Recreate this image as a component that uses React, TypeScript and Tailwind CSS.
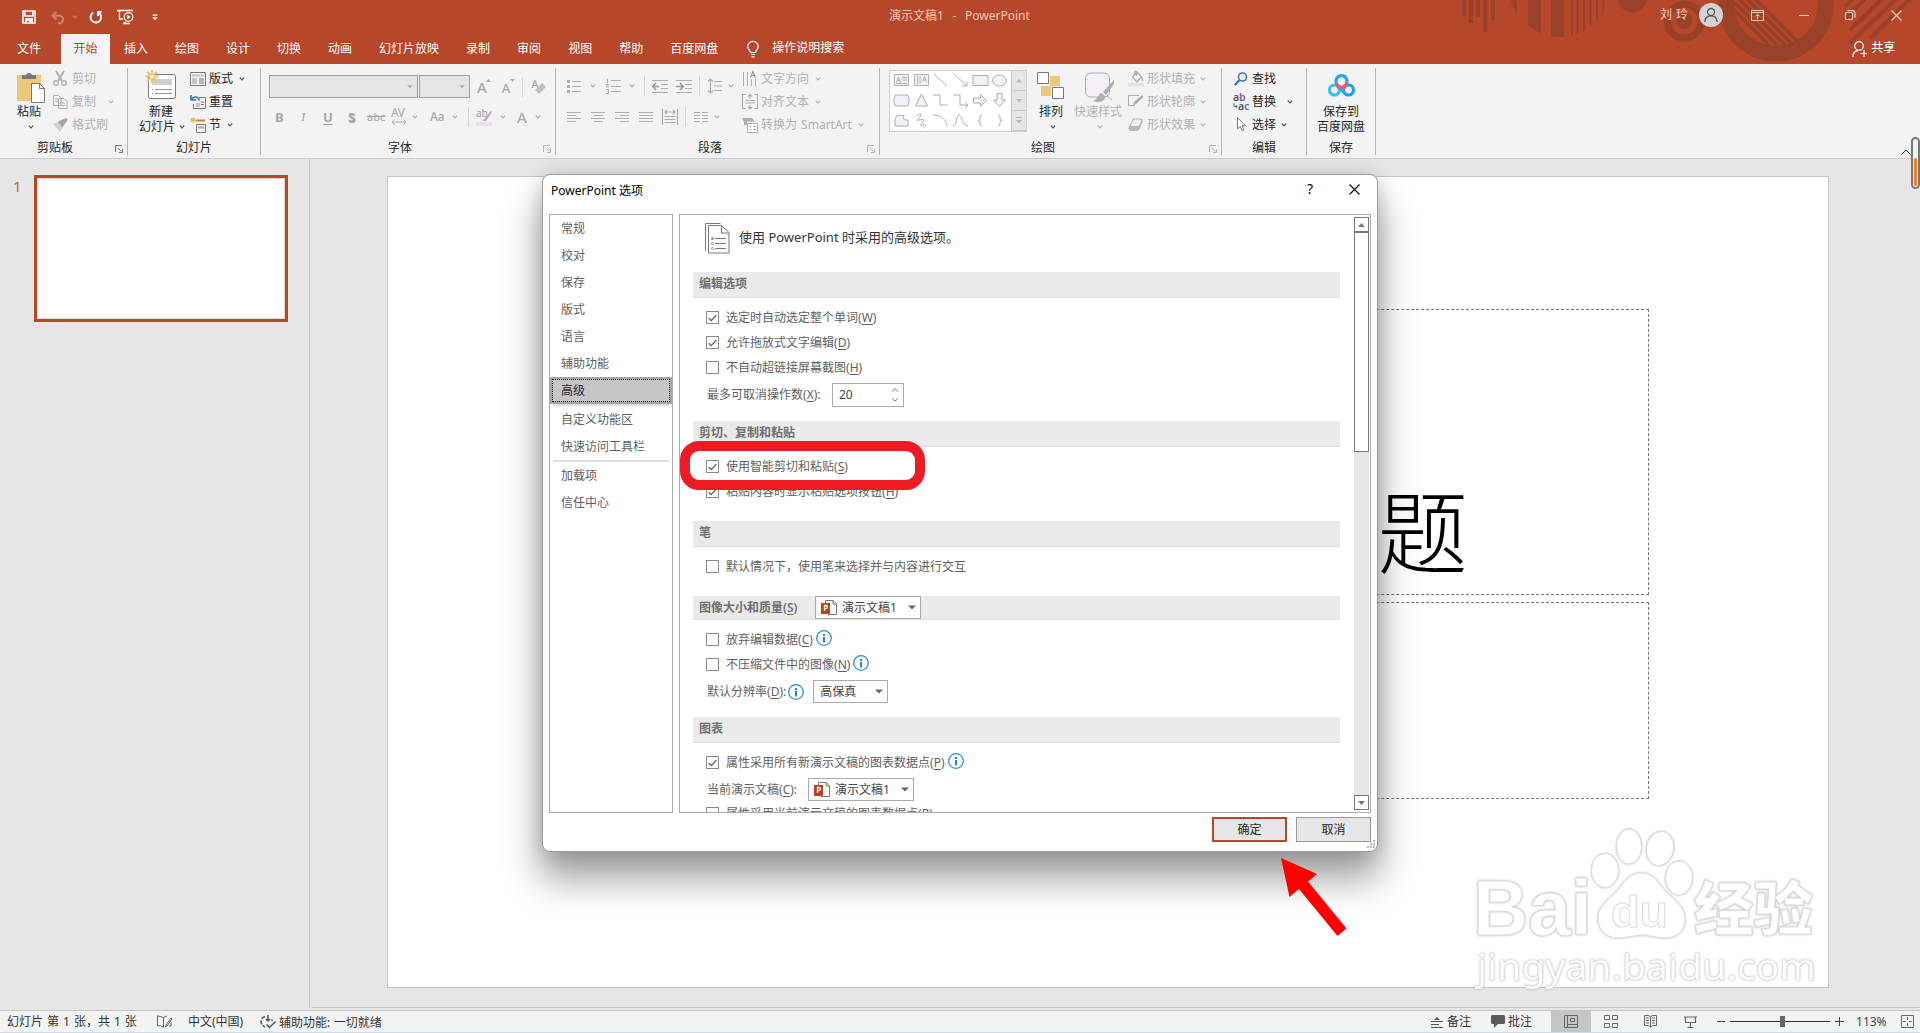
import React from "react";

const INK = "#b0adb0";

function Ico({ w, h, className = "", children }: { w: number; h: number; className?: string; children: React.ReactNode }) {
  return (
    <svg width={w} height={h} viewBox={`0 0 ${w} ${h}`} fill="none" className={`shrink-0 overflow-visible ${className}`}>
      {children}
    </svg>
  );
}

function Chev({ className = "", color = "#555" }: { className?: string; color?: string }) {
  return (
    <Ico w={6} h={4} className={className}>
      <path d="M.8.6 3 2.8 5.200.6" stroke={color} strokeWidth="1.2" />
    </Ico>
  );
}

function VSep({ className = "" }: { className?: string }) {
  return <span className={`h-5 w-px shrink-0 bg-[#d4d4d4] ${className}`} />;
}

function Group({ label, width, pad, launcher, dim, children }: { label: string; width: string; pad: string; launcher?: boolean; dim?: boolean; children: React.ReactNode }) {
  return (
    <div className={`flex h-[87px] shrink-0 flex-col border-r border-[#b5b5b5] ${width}`}>
      <div className="flex h-[70px]">{children}</div>
      <div className="flex h-[17px] items-center text-[#262626]">
        <span className={`flex-1 whitespace-nowrap pt-[3px] leading-[16px] ${pad}`}>{label}</span>
        {launcher && (
          <Ico w={8} h={8} className="mr-1 mt-1">
            <path d="M.5 7V.5H7M3 3l3.500 3.500M7.500 4v3.500H4" stroke={dim ? "#b5b5b5" : "#777"} />
          </Ico>
        )}
      </div>
    </div>
  );
}

const tabs = ["插入", "绘图", "设计", "切换", "动画", "幻灯片放映", "录制", "审阅", "视图", "帮助", "百度网盘"];

function TitleArt() {
  return (
    <svg className="absolute left-[1440px] top-0" width="480" height="64" viewBox="1440 0 480 64" fill="#9a4129">
      <path d="M1462 0h4v16h-4zM1469 0h4v23h-4zM1476 0h4v17h-4zM1483 0h4.500v32h-4.500zM1491 0h4v20h-4z" />
      <clipPath id="dome"><circle cx="1560" cy="-14" r="51" /></clipPath>
      <g clipPath="url(#dome)">
        <path d="M1508 0h9v40h-9zM1528 0h13v40h-13zM1551 0h13v40h-13zM1571 0h2v40h-2zM1576.500 0h2v40h-2zM1583 0h2v40h-2zM1589.500 0h2v40h-2zM1596 0h2v40h-2zM1602.500 0h2v40h-2zM1608.500 0h2v40h-2z" />
      </g>
      <circle cx="1632.500" cy="-2" r="14.500" />
      <circle cx="1684.300" cy="21" r="17" fill="none" stroke="#9a4129" strokeWidth="7" />
      <circle cx="1684.300" cy="21" r="8" />
      <circle cx="1776" cy="3.500" r="50" fill="none" stroke="#9a4129" strokeWidth="16" />
      <clipPath id="disc"><circle cx="1776" cy="3.500" r="43" /></clipPath>
      <g clipPath="url(#disc)" stroke="#9a4129" strokeWidth="3.500">
        <path d="M1716-8l70 70M1724-8l70 70M1732-8l70 70M1740-8l70 70M1748-8l70 70" />
      </g>
      <g stroke="#9a4129" strokeWidth="4">
        <path d="M1845 7l10-10M1846 18l22-22M1860 21l24-24M1850 43l48-46M1870 39l42-42M1850 30l30-30" />
      </g>
    </svg>
  );
}

function TitleBar() {
  return (
    <header className="relative h-16 bg-[#b7472a] text-white">
      <TitleArt />
      <div className="relative flex h-[34px] items-center">
        <Ico w={14} h={14} className="ml-[22px]">
          <path d="M1 1h12v12H1zM3 1v5h8V1" stroke="#fff" strokeWidth="1.600" />
          <path d="M3 8h8v5H7v-2H5v2H3z" fill="#fff" />
        </Ico>
        <Ico w={15} h={13} className="ml-[15px]">
          <path d="M5.500.8 1.500 4.800l4 4M2 4.800h7.500a4 4 0 0 1 0 7.400H7" stroke="#d1836d" strokeWidth="2" />
        </Ico>
        <Chev className="ml-1.5" color="#d1836d" />
        <Ico w={14} h={14} className="ml-[11px]">
          <path d="M4.200 2.600a5.300 5.300 0 1 0 5.600.2M12.500 2H9v4" stroke="#fff" strokeWidth="1.900" />
        </Ico>
        <Ico w={17} h={16} className="ml-3.5">
          <path d="M0 1.500h16M2.500 1.500V10H6M6 14.500h7M8 12.500v2" stroke="#fff" strokeWidth="1.300" />
          <circle cx="11.500" cy="8" r="4.300" stroke="#fff" strokeWidth="1.200" />
          <path d="M10.300 5.800v4.400L13.700 8z" fill="#fff" />
        </Ico>
        <Ico w={6} h={7} className="ml-[18px]">
          <path d="M.5.500h5v1.200h-5zM.2 3.300h5.600L3 6.300z" fill="#fff" />
        </Ico>
        <span className="ml-[731px] w-[145px] whitespace-pre pb-0.5 [word-spacing:1.2px] text-[#fbc9b5]">演示文稿1  -  PowerPoint</span>
        <span className="ml-[626px] w-[34px] whitespace-pre pb-1 [word-spacing:1px] text-[#fbd3c4]">刘 玲</span>
        <span className="ml-[5px] -mt-1 flex size-6 items-center justify-center rounded-full bg-[#d3d3d3]">
          <Ico w={14} h={14}>
            <circle cx="7" cy="4" r="3.500" stroke="#555" strokeWidth="1.300" />
            <path d="M.8 14C1 10 3.500 7.800 7 7.800s6 2.200 6.200 6.200" stroke="#555" strokeWidth="1.300" />
          </Ico>
        </span>
        <Ico w={13} h={11} className="-mt-1 ml-7">
          <path d="M.5.500h12v10H.5zM.5 2.500h12M6.500 9V4.500M4.500 6.300l2-2 2 2" stroke="#fbd3c4" />
        </Ico>
        <Ico w={10} h={1} className="-mt-1 ml-[35px]"><path d="M0 .5h10" stroke="#fbd3c4" /></Ico>
        <Ico w={11} h={11} className="-mt-1 ml-9">
          <path d="M.5 3.500q0-1 1-1h5q1 0 1 1v5q0 1-1 1h-5q-1 0-1-1zM2.500.600h5.500q1.900.2 1.900 2V8" stroke="#fbd3c4" strokeWidth="1.100" />
        </Ico>
        <Ico w={11} h={11} className="-mt-1 ml-[35px]"><path d="M.5.500l10 10M10.500.500l-10 10" stroke="#fbd3c4" strokeWidth="1.100" /></Ico>
      </div>
      <nav className="relative flex h-[30px] items-center leading-[30px]">
        <span className="w-[44px] pl-[17px]">文件</span>
        <span className="ml-[17px] h-[30px] w-[49px] bg-[#f3f3f3] text-center text-[#b7472a]">开始</span>
        <div className="ml-3.5 flex gap-[27px] whitespace-nowrap">
          {tabs.map((t) => <span key={t}>{t}</span>)}
        </div>
        <Ico w={12} h={17} className="ml-[29px]">
          <path d="M3.500 11.500C3.500 9.500.8 8.500.8 5.500a5.200 5.200 0 0 1 10.400 0c0 3-2.700 4-2.700 6zM4 13.500h4M4.500 15.800h3" stroke="#fff" strokeWidth="1.200" />
        </Ico>
        <span className="ml-[13px] w-[80px] pb-0.5">操作说明搜索</span>
        <Ico w={15} h={16} className="ml-[1000px]">
          <circle cx="7" cy="5" r="4.300" stroke="#fff" strokeWidth="1.200" />
          <path d="M.8 16c0-4 2.200-6 5.500-6.400M12 9v7M8.500 12.500H15" stroke="#fff" strokeWidth="1.200" />
        </Ico>
        <span className="ml-1 pb-0.5">共享</span>
      </nav>
    </header>
  );
}

function Row({ icon, text, chev, dim, gap = "ml-1" }: { icon: React.ReactNode; text: string; chev?: string; dim?: boolean; gap?: string }) {
  return (
    <div className={`-mt-px mb-px flex h-[23px] items-center whitespace-nowrap ${dim ? "text-[#b1b1b1]" : "text-[#262626]"}`}>
      <span className="flex w-4 shrink-0 justify-center">{icon}</span>
      <span className={gap}>{text}</span>
      {chev && <Chev className={chev} color={dim ? "#b5b5b5" : "#555"} />}
    </div>
  );
}

function ClipboardGroup() {
  return (
    <Group label="剪贴板" width="w-[128px]" pad="pl-[37px]" launcher>
      <div className="ml-[17px] mt-1 flex w-[30px] flex-col">
        <Ico w={29} h={31}>
          <path d="M0 3h24v26H0z" fill="#ecc77c" />
          <path d="M5 3h4a3.200 3.200 0 0 1 6 0h4v4H5z" fill="#777" />
          <path d="M14.500 11.500h8l5 5v14h-13z" fill="#fff" stroke="#777" />
          <path d="M22.500 11.500v5h5" stroke="#777" />
        </Ico>
        <span className="mt-0.5 whitespace-nowrap leading-[14px] text-[#262626]">粘贴</span>
        <Chev className="ml-[11px] mt-1.5" />
      </div>
      <div className="ml-[5px]">
        <Row dim text="剪切" icon={
          <Ico w={14} h={15}>
            <path d="M3 0l6 10M11 0L5 10" stroke={INK} strokeWidth="2" />
            <circle cx="3" cy="12" r="2.300" stroke={INK} strokeWidth="1.300" /><circle cx="11" cy="12" r="2.300" stroke={INK} strokeWidth="1.300" />
          </Ico>} />
        <Row dim text="复制" chev="ml-3" icon={
          <Ico w={15} h={14}>
            <path d="M.5.500h5l2.500 2.500v7.500H.5zM5.500 3.500h5.500l3 3v7h-8.500z" fill="#f3f3f3" stroke={INK} />
            <path d="M2 4h3M2 6.500h3M7.500 8h4M7.500 10.500h5" stroke={INK} />
          </Ico>} />
        <Row dim text="格式刷" icon={
          <Ico w={15} h={14}>
            <path d="M0 6l5-2 5 5-3 5z" fill="#d2d0d2" />
            <path d="M5 4l2-1.500L13.500 0 15 1.500 11 7l-1.500 2.500z" fill="#a9a6a9" />
          </Ico>} />
      </div>
    </Group>
  );
}

function SlidesGroup() {
  return (
    <Group label="幻灯片" width="w-[133px]" pad="pl-12">
      <div className="ml-[9px] mt-0.5 flex w-12 flex-col items-center text-[#262626]">
        <Ico w={32} h={30} className="-ml-px">
          <path d="M3.500 6.500q0-2 2-2h23q2 0 2 2v20q0 2-2 2h-23q-2 0-2-2z" fill="#fff" stroke="#777" />
          <path d="M7 9h20v6H7z" fill="#cfcfcf" />
          <path d="M7 19.500h1.500M10 19.500h17M7 23.500h1.500M10 23.500h17" stroke="#999" />
          <path d="M7 0v13M.5 6.500h13M2.300 2l9.400 9M11.700 2l-9.400 9" stroke="#ecbf69" strokeWidth="1.800" />
          <circle cx="7" cy="6.500" r="2.300" fill="#fff" stroke="#ecbf69" />
        </Ico>
        <span className="mt-[5px] leading-[14px]">新建</span>
        <span className="flex items-center whitespace-nowrap pl-0.5 leading-4">幻灯片<Chev className="ml-1" /></span>
      </div>
      <div className="ml-[5px]">
        <Row text="版式" chev="ml-1.5" gap="ml-[3px]" icon={
          <Ico w={16} h={14}><path d="M.5.500h15v13H.5z" stroke="#777" /><path d="M2 2.500h12v2H2zM2 6h5v6H2z" fill="#c4c4c4" /><path d="M9 7h5M9 9h5M9 11h5" stroke="#777" /></Ico>} />
        <Row text="重置" gap="ml-[3px]" icon={
          <Ico w={16} h={14}><path d="M9 2.500h6.500v11h-12V9" stroke="#777" /><path d="M6 8h4v4H6z" fill="#c4c4c4" /><path d="M11 7h3M11 9.500h3" stroke="#777" /><path d="M1 0v5h5M1.500 4.500C4 1 8 1 9.500 5.500" stroke="#3f78b5" strokeWidth="1.700" /></Ico>} />
        <Row text="节" chev="ml-1.5" gap="ml-[3px]" icon={
          <Ico w={16} h={16}><path d="M6 3.500h9" stroke="#e07a2c" strokeWidth="2" /><path d="M6.500 7.500h9v8h-9z" stroke="#777" /><path d="M8 10.500h6" stroke="#aaa" strokeWidth="2" /><path d="M3 0v6M0 3h6M1 1l4 4M5 1L1 5" stroke="#e3ac4a" /></Ico>} />
      </div>
    </Group>
  );
}

function FontGroup() {
  return (
    <Group label="字体" width="w-[295px]" pad="pl-[127px]" launcher dim>
      <div className="w-full text-[#a9a6a9]">
        <div className="mt-[7px] flex h-[23px] items-center pl-2">
          <span className="flex h-[23px] w-[149px] items-center justify-end border border-[#a0a0a0] bg-[#e5e5e5] pr-1"><Ico w={6} h={4}><path d="M0 0h6L3 3.500z" fill="#b5b5b5" /></Ico></span>
          <span className="ml-px flex h-[23px] w-[51px] items-center justify-end border border-[#a0a0a0] bg-[#e5e5e5] pr-1"><Ico w={6} h={4}><path d="M0 0h6L3 3.500z" fill="#b5b5b5" /></Ico></span>
          <span className="ml-[7px] text-[15px] font-medium">A</span>
          <Ico w={5} h={3} className="-ml-px -mt-3"><path d="M0 3h5L2.500 0z" fill={INK} /></Ico>
          <span className="ml-[11px] pt-0.5 text-[13px] font-medium">A</span>
          <Ico w={5} h={3} className="-mt-3"><path d="M0 0h5L2.500 3z" fill={INK} /></Ico>
          <VSep className="ml-[7px]" />
          <span className="ml-2 -mt-1.5 text-[11px] font-medium">A</span>
          <Ico w={11} h={11} className="-ml-1 mt-1"><path d="M0 7l7-7 4 4-7 7z" fill="#c2bfc2" /></Ico>
        </div>
        <div className="mt-[7px] flex h-6 items-center pl-[14px] text-[13px]">
          <b className="w-6">B</b>
          <i className="w-6 pl-0.5 [font-family:'Liberation_Serif',serif]">I</i>
          <b className="w-6 underline underline-offset-2">U</b>
          <b className="w-[20px] pl-px [text-shadow:1px_1px_1px_#aaa]">S</b>
          <span className="w-6 text-[11px] line-through">abc</span>
          <span className="relative w-4 pb-2 text-[12px] tracking-[-.5px]">AV
            <Ico w={16} h={6} className="absolute left-0 top-[14px]"><path d="M1 3h14M3.500.500L1 3l2.500 2.500M12.500.500L15 3l-2.500 2.500" stroke={INK} /></Ico>
          </span>
          <Chev className="ml-[5px]" color={INK} />
          <span className="ml-3 w-[17px] text-[12px] font-medium">Aa</span>
          <Chev className="ml-[5px]" color={INK} />
          <VSep className="ml-2.5" />
          <Ico w={17} h={17} className="ml-[7px]">
            <text x="0" y="8" fontSize="10" fill="#a09da0" fontFamily="Noto Sans">ab</text>
            <path d="M15 2L8 10l-2 2h4l6-9z" fill="#b5b2b5" /><path d="M0 13h16v4H0z" fill="#e6e1e8" />
          </Ico>
          <Chev className="ml-[7px]" color={INK} />
          <span className="ml-[11px] text-[15px] font-medium">A</span>
          <Chev className="ml-2" color={INK} />
        </div>
      </div>
    </Group>
  );
}

function Lines({ d, className = "" }: { d: string; className?: string }) {
  return <Ico w={15} h={12} className={className}><path d={d} stroke={INK} /></Ico>;
}

function ParagraphGroup() {
  return (
    <Group label="段落" width="w-[324px]" pad="pl-[142px]" launcher dim>
      <div className="w-[187px] shrink-0">
        <div className="mt-[6px] flex h-6 items-center pl-[11px]">
          <Ico w={15} h={15}><path d="M5 2.500h9M5 7.500h9M5 12.500h9" stroke={INK} /><path d="M0 1h3v3H0zM0 6h3v3H0zM0 11h3v3H0z" fill={INK} /></Ico>
          <Chev className="ml-2" color={INK} />
          <Ico w={16} h={16} className="ml-2.5"><path d="M5 2.500h10M5 8.500h10M5 13.500h10M.5 1h1v4M0 6.500h2.500L.5 9H3M0 11.500h2.500v4H0" stroke={INK} /></Ico>
          <Chev className="ml-[7px]" color={INK} />
          <VSep className="ml-[9px]" />
          <Ico w={16} h={13} className="ml-[7px]"><path d="M0 .5h16M9 4.500h7M9 8.500h7M0 12.500h16" stroke={INK} /><path d="M4 3L.8 6.500 4 10M1 6.500h6" stroke="#999" strokeWidth="1.500" /></Ico>
          <Ico w={16} h={13} className="ml-2"><path d="M0 .5h16M9 4.500h7M9 8.500h7M0 12.500h16" stroke={INK} /><path d="M4 3l3.200 3.500L4 10M0 6.500h7" stroke="#999" strokeWidth="1.500" /></Ico>
          <VSep className="ml-[7px]" />
          <Ico w={14} h={16} className="ml-2"><path d="M6 3.500h8M6 8h8M6 12.500h8M2.500 1v14M0 3.500L2.500 1 5 3.500M0 12.500L2.500 15 5 12.500" stroke={INK} strokeWidth="1.200" /></Ico>
          <Chev className="ml-1.5" color={INK} />
        </div>
        <div className="mt-[7px] flex h-6 items-center pl-[11px]">
          <Lines d="M0 1.500h14M0 4.500h9M0 7.500h14M0 10.500h9" />
          <Lines className="ml-[9px]" d="M0 1.500h14M3 4.500h9M0 7.500h14M3 10.500h9" />
          <Lines className="ml-[9px]" d="M0 1.500h14M5 4.500h9M0 7.500h14M5 10.500h9" />
          <Lines className="ml-[9px]" d="M0 1.500h14M0 4.500h14M0 7.500h14M0 10.500h14" />
          <Ico w={16} h={16} className="ml-2"><path d="M.5 0v16M15.500 0v16M3 3h10M5 .8L2.800 3 5 5.200M11 .8L13.200 3 11 5.200M2.500 7.500h11M2.500 10.500h11M2.500 13.500h11" stroke={INK} strokeWidth="1.100" /></Ico>
          <VSep className="ml-[7px]" />
          <Ico w={14} h={12} className="ml-2"><path d="M0 1.500h6M8 1.500h6M0 4.500h6M8 4.500h6M0 7.500h6M8 7.500h6M0 10.500h6M8 10.500h6" stroke={INK} /></Ico>
          <Chev className="ml-1.5" color={INK} />
        </div>
      </div>
      <div className="-ml-px">
        <Row dim text="文字方向" chev="ml-1.5" gap="ml-[3px]" icon={
          <Ico w={16} h={16}><path d="M1.500 1v14M5.500 1v14M9.500 8v7M13.500 8v7" stroke={INK} /><path d="M8.500 6.500L11 .500l2.500 6M9.500 4.500h3" stroke="#999" strokeWidth="1.200" /></Ico>} />
        <Row dim text="对齐文本" chev="ml-1.5" gap="ml-[3px]" icon={
          <Ico w={16} h={16}><path d="M3.500.500h-3v14h3M12.500.500h3v14h-3M3 6.500h10M3 9h10M8 0v5M6 2.500L8 .500l2 2M8 15v-4M6 13l2 2 2-2" stroke={INK} strokeWidth="1.100" /></Ico>} />
        <Row dim text="转换为 SmartArt" chev="ml-[6px]" gap="ml-[3px] [word-spacing:1px]" icon={
          <Ico w={16} h={16}><path d="M0 1h10l3 3.500H5L5 8H2V5z" fill={INK} /><path d="M5.500 6.500h10v9h-10z" fill="#fff" stroke={INK} /><path d="M7.500 9.500h2M11 9.500h3M7.500 12.500h2M11 12.500h3" stroke={INK} /></Ico>} />
      </div>
    </Group>
  );
}

const shapes = [
  <><path d="M1.500 2.500h14v11h-14z" fill="#f5eff7" /><path d="M3.500 10.500L5.500 5l2 5.500M4 8.500h3M9 5.500h5M9 8h5M3 11.500h11" /></>,
  <><path d="M1.500 2.500h14v11h-14z" fill="#f5eff7" /><path d="M4.500 4v8M7 4v8M9.500 9.500L11.500 4.500l2 5M10 8h3" /></>,
  <path d="M2 2l13 12" />,
  <path d="M2 2l13 12M15 9.500V14h-5" />,
  <path d="M1 3.500h15v10H1z" fill="#f5eff7" />,
  <ellipse cx="8.500" cy="8.500" rx="7" ry="5.500" fill="#f5eff7" />,
  <rect x="1" y="3" width="15" height="11" rx="3" fill="#f5eff7" />,
  <path d="M8.500 2l6 12h-12z" fill="#f5eff7" />,
  <path d="M1 3h7v10h8" />,
  <path d="M1 3h7v10h8M13 10l3 3-3 3" />,
  <path d="M1.500 6h7V2.500l6 6-6 6V11h-7z" fill="#f5eff7" />,
  <path d="M6 1.500V8H2.500l6 6.500 6-6.500H11V1.500z" fill="#f5eff7" />,
  <path d="M4 3.500h7q-2 3 1 4.500h3v6H2V7z" fill="#f5eff7" />,
  <path d="M4 4c3-4 5-2 3 1s-5 4-1 3 6-1 4 2-4 5 0 3 3 3 0 3" />,
  <path d="M1 3c8 0 13 4 14 11" />,
  <path d="M1 14C5 14 4 3 7 3s3 11 9 11" />,
  <path d="M10 3q-2 0-2 2v2q0 1.500-2 1.500Q8 8.500 8 10v2q0 2 2 2" />,
  <path d="M7 3q2 0 2 2v2q0 1.500 2 1.500-2 0-2 1.500v2q0 2-2 2" />,
];

function DrawingGroup() {
  return (
    <Group label="绘图" width="w-[342px]" pad="pl-[151px]" launcher dim>
      <div className="ml-[9px] mt-0.5 flex h-[62px] w-[138px] shrink-0 border border-[#cfcfcf] bg-white">
        <div className="-mt-px grid w-[122px] grid-cols-6 grid-rows-3 pl-[3px]">
          {shapes.map((s, i) => (
            <span key={i} className="flex items-center"><svg width="17" height="17" viewBox="0 0 17 17" fill="none" stroke={INK}>{s}</svg></span>
          ))}
        </div>
        <div className="flex w-[15px] flex-col border-l border-[#c6c6c6] bg-[#e6e6e6]">
          {["M0 3.500h6L3 0z", "M0 0h6L3 3.500z", "M0 0h6L3 3.500z"].map((d, i) => (
            <span key={i} className="flex flex-1 flex-col items-center justify-center gap-0.5 border-b border-[#c6c6c6]">
              {i === 2 && <i className="h-px w-1.5 bg-[#b5b5b5]" />}
              <Ico w={6} h={4}><path d={d} fill="#b5b5b5" /></Ico>
            </span>
          ))}
        </div>
      </div>
      <div className="ml-2.5 mt-1 flex w-[30px] flex-col text-[#262626]">
        <Ico w={27} h={28}>
          <path d="M13 4h10v10H13zM4 14h10v10H4z" fill="#ecc77c" />
          <path d="M.5.500h11v11H.5zM15.500 15.500h11v11h-11z" fill="#fff" stroke="#777" />
        </Ico>
        <span className="ml-0.5 mt-[5px] leading-[14px]">排列</span>
        <Chev className="ml-[13px] mt-1.5" />
      </div>
      <div className="ml-[7px] mt-1 flex w-12 flex-col text-[#b1b1b1]">
        <Ico w={30} h={31} className="ml-[11px]">
          <path d="M.5 7q0-6 6-6h12q6 0 6 6v12q0 6-6 6h-12q-6 0-6-6z" fill="#f5eff7" stroke={INK} />
          <path d="M29 8L18 20l3 3 8-11zM17 21c-4 0-3 6-9 8 5 2 13 1 12-5z" fill={INK} />
          <path d="M22 24l5 4" stroke={INK} />
        </Ico>
        <span className="mt-0.5 whitespace-nowrap leading-[14px]">快速样式</span>
        <Chev className="ml-[23px] mt-1.5" color="#b5b5b5" />
      </div>
      <div className="ml-1.5">
        <Row dim text="形状填充" chev="ml-[5px]" gap="ml-[3px]" icon={
          <Ico w={16} h={17}><path d="M4.500 7L9 2l4.500 5L9 12zM6.500 5V2q1-2 2 0v4" stroke={INK} strokeWidth="1.200" /><path d="M13 6q3 3 2 6-2-2-2-6z" fill={INK} /><path d="M0 13h16v3.500H0z" fill="#e6e1e6" /></Ico>} />
        <Row dim text="形状轮廓" chev="ml-[5px]" gap="ml-[3px]" icon={
          <Ico w={16} h={16}><path d="M11 1.500H.5v10H7" stroke={INK} /><path d="M14 1l1.500 2L8 10l-3 1 1-3z" fill={INK} /></Ico>} />
        <Row dim text="形状效果" chev="ml-[5px]" gap="ml-[3px]" icon={
          <Ico w={16} h={15}><path d="M5 1.500h7q3.500 0 2.500 3.500l-2.500 6q-1 3-4 3H3Q-.5 13 .8 10z" fill="#b9b5b9" /><path d="M6 2.500h5q2.500 0 1.700 2.200l-1.200 2.800q-.6 1.500-2.500 1.500H4.500Q2.500 9 3.300 7z" fill="#f5f2f5" /></Ico>} />
      </div>
    </Group>
  );
}

function Ribbon() {
  return (
    <div className="flex h-[95px] border-b border-[#cfcfcf] bg-[#f3f3f3] pt-1">
      <ClipboardGroup />
      <SlidesGroup />
      <FontGroup />
      <ParagraphGroup />
      <DrawingGroup />
      <Group label="编辑" width="w-[85px]" pad="pl-[30px]">
        <div className="ml-[11px]">
          <Row text="查找" gap="ml-[3px]" icon={<Ico w={14} h={14}><circle cx="8.500" cy="5" r="4" stroke="#3f78b5" strokeWidth="1.600" /><path d="M5.500 8L.8 13" stroke="#3f78b5" strokeWidth="2.400" /></Ico>} />
          <Row text="替换" gap="ml-[3px]" chev="ml-[11px]" icon={
            <Ico w={16} h={18}><g fontSize="10.500" fontWeight="600" fontFamily="Noto Sans"><text x="0" y="8" fill="#555">a</text><text x="6" y="8" fill="#8a56ac">b</text><text x="5" y="17" fill="#555">a</text><text x="11" y="17" fill="#3f78b5">c</text></g><path d="M1 10v3.500h3M2.800 12l1.500 1.500L2.800 15" stroke="#3f78b5" /></Ico>} />
          <Row text="选择" gap="ml-[3px]" chev="ml-[5px]" icon={<Ico w={9} h={15}><path d="M.5.800v11l2.800-2.500 1.900 4.500 1.700-.8L5 8.800l3.500-.3z" fill="#fff" stroke="#777" /></Ico>} />
        </div>
      </Group>
      <Group label="保存" width="w-[69px]" pad="pl-[22px]">
        <div className="ml-2.5 mt-[7px] flex w-12 flex-col items-center whitespace-nowrap text-[#262626]">
          <Ico w={27} h={22} className="ml-px">
            <circle cx="6.500" cy="15" r="5" stroke="#33c3f5" strokeWidth="3.200" />
            <circle cx="20.500" cy="15" r="5" stroke="#1f9df2" strokeWidth="3.200" />
            <path d="M8.500 8.500a5.500 5.500 0 1 1 10 0" stroke="#27a9f0" strokeWidth="3.200" />
            <path d="M8.500 8a5 5 0 0 0 10 0" stroke="#f4536d" strokeWidth="3.200" />
            <path d="M10 11l7.500 8" stroke="#27a9f0" strokeWidth="3" />
            <path d="M9.500 10q4 4.500 8 0" stroke="#f4536d" strokeWidth="2.800" />
          </Ico>
          <span className="mt-2 leading-[14px]">保存到</span>
          <span className="leading-4">百度网盘</span>
        </div>
      </Group>
      <div className="ml-auto flex items-end pb-[3px]">
        <Ico w={10} h={6} className="mr-[9px]"><path d="M.5 5.500L5 1l4.500 4.500" stroke="#444" /></Ico>
      </div>
    </div>
  );
}

function Watermark() {
  return (
    <svg className="absolute left-[1460px] top-[820px] [filter:drop-shadow(0_0_1.2px_rgba(0,0,0,.28))]" width="380" height="180" viewBox="1460 820 380 180">
      <g fill="#fff" stroke="#dcdcdc" strokeWidth="1">
        <ellipse cx="1605" cy="870.500" rx="13.500" ry="17" />
        <ellipse cx="1629" cy="846.500" rx="12.500" ry="17.500" />
        <ellipse cx="1660" cy="848.500" rx="13.500" ry="17" transform="rotate(12 1660 848.500)" />
        <ellipse cx="1679" cy="878" rx="13.500" ry="17" />
        <path d="M1642 873c9 0 15 7 20 14 7 10 23 17 23 32 0 13-9 19-20 19-8 0-15-3-23-3s-15 3-24 3c-12 0-20-8-20-20 0-13 14-20 22-31 6-8 12-14 22-14z" />
        <text x="1473" y="935" fontFamily="Liberation Sans" fontWeight="700" fontSize="77" textLength="119" lengthAdjust="spacingAndGlyphs">Bai</text>
        <text x="1611" y="927" fontFamily="Liberation Sans" fontWeight="700" fontSize="45" textLength="57" lengthAdjust="spacingAndGlyphs">du</text>
        <text x="1694" y="930" fontFamily="Noto Sans CJK SC" fontWeight="900" fontSize="58" textLength="119" lengthAdjust="spacingAndGlyphs">经验</text>
      </g>
      <text x="1477" y="980" fill="#fff" stroke="#e4e4e4" strokeWidth=".6" fontFamily="Noto Sans" fontWeight="400" fontSize="37" textLength="339" lengthAdjust="spacingAndGlyphs">jingyan.baidu.com</text>
    </svg>
  );
}

function Workspace() {
  return (
    <main className="flex h-[851px] bg-[#e6e6e6]">
      <aside className="flex h-[849px] w-[310px] shrink-0 border-r border-[#c6c6c6] pl-[13px] pt-4">
        <span className="w-[21px] pt-px text-[15px] leading-5 text-[#d4603f]">1</span>
        <div className="h-[147px] w-[254px] border-[3px] border-[#b7472a] bg-white p-px">
          <div className="h-full outline outline-1 outline-[#dcdcdc]" />
        </div>
      </aside>
      <div className="ml-0.5 flex h-[849px] flex-1 border-b border-[#c6c6c6] pl-[75px] pt-[17px]">
        <div className="h-[812px] w-[1442px] border border-[#c6c6c6] bg-white pl-[179px] pt-[132px]">
          <div className="flex h-[286px] w-[1082px] items-end justify-end border border-dashed border-[#777] pb-3 pr-[180px]">
            <span className="whitespace-nowrap text-[90.400px] font-light leading-[100px] text-black">题</span>
          </div>
          <div className="mt-[7px] h-[197px] w-[1082px] border border-dashed border-[#777]" />
        </div>
      </div>
    </main>
  );
}

function Check({ on }: { on?: boolean }) {
  return (
    <span className="flex size-[13px] shrink-0 items-center justify-center border border-[#8a8a8a] bg-white">
      {on && <Ico w={9} h={8}><path d="M.7 4.200l2.500 2.500L8.300 1.200" stroke="#555" strokeWidth="1.200" /></Ico>}
    </span>
  );
}

function Info({ className = "" }: { className?: string }) {
  return (
    <Ico w={16} h={16} className={className}>
      <circle cx="8" cy="8" r="7.300" stroke="#2b8fd0" strokeWidth="1.300" fill="#fff" />
      <path d="M7 4h2v2H7zM7 7h2v5.500H7z" fill="#1f86cc" />
    </Ico>
  );
}

function Key({ text, k, tail = "" }: { text: string; k: string; tail?: string }) {
  return <span className="whitespace-nowrap">{text}(<span className="underline underline-offset-2">{k}</span>){tail}</span>;
}

function Option({ on, text, k, info }: { on?: boolean; text: string; k?: string; info?: boolean }) {
  return (
    <div className="flex h-[25px] shrink-0 items-center pl-[13px]">
      <Check on={on} />
      <span className="ml-[7px] flex items-center">
        {k ? <Key text={text} k={k} /> : text}
        {info && <Info className="ml-[3px] -mt-[3px]" />}
      </span>
    </div>
  );
}

function SectionHead({ children, className = "" }: { children: React.ReactNode; className?: string }) {
  return <div className={`flex w-[647px] shrink-0 items-center border-b border-[#e0e0e0] bg-[#eaeaea] pl-1.5 font-semibold text-[#707070] ${className}`}>{children}</div>;
}

function Select({ text, doc, className }: { text: string; doc?: boolean; className: string }) {
  return (
    <span className={`flex h-[23px] items-center justify-between border border-[#ababab] bg-white pl-1.5 pr-1 font-normal text-[#444] ${className}`}>
      <span className="flex items-center">
        {doc && (
          <Ico w={16} h={16} className="mr-[5px] -ml-px">
            <path d="M4.500 3V.500h7.500l3.500 3v11l-8 0v1" stroke="#777" /><path d="M12 .5v3.500h3.500" stroke="#777" />
            <path d="M0 3h9v11H0z" fill="#c43e1c" />
            <path d="M3.500 11V5.500h1.500a1.500 1.500 0 0 1 0 3H3.500" stroke="#fff" strokeWidth="1.300" />
          </Ico>
        )}
        {text}
      </span>
      <Ico w={8} h={5}><path d="M0 .5h8L4 4.500z" fill="#666" /></Ico>
    </span>
  );
}

const pages = ["常规", "校对", "保存", "版式", "语言", "辅助功能", "高级", "自定义功能区", "快速访问工具栏", "加载项", "信任中心"];

function OptionsDialog() {
  return (
    <section className="absolute left-[542px] top-[174px] h-[678px] w-[836px] rounded-[8px] border border-[#9c9c9c] bg-white text-[#606060] shadow-[0_26px_36px_2px_rgba(0,0,0,.36),0_2px_20px_rgba(0,0,0,.16)]">
      <div className="flex h-[39px] items-center pl-2 text-black">
        <span className="h-[30px] flex-1 leading-[21px]">PowerPoint 选项</span>
        <span className="mr-9 pb-3 text-[14px]">?</span>
        <Ico w={11} h={11} className="mb-2.5 mr-[17px]"><path d="M.5.500l10 10M10.500.500l-10 10" stroke="#111" strokeWidth="1.200" /></Ico>
      </div>
      <div className="flex gap-1.5 pl-1.5">
        <nav className="h-[599px] w-[124px] border border-[#ababab]">
          {pages.map((p, i) => (
            <React.Fragment key={p}>
              {(i === 7 || i === 9) && <div className="mx-[3px] h-0.5 bg-[#dedede]" />}
              {i === 6 ? (
                <div className="h-[27px] border-2 border-[#a6a6a6] bg-[#c6c6c6] text-[#262626]">
                  <div className="h-[23px] border border-dotted border-black pl-2 leading-[21px]">{p}</div>
                </div>
              ) : (
                <div className="h-[27px] pl-[11px] leading-[27px]">{p}</div>
              )}
            </React.Fragment>
          ))}
        </nav>
        <div className="flex h-[599px] w-[692px] overflow-hidden border border-[#ababab]">
          <div className="flex w-[674px] flex-col pl-[13px]">
            <div className="flex h-[57px] shrink-0 items-start pl-3 pt-2 text-[13px] text-[#333]">
              <Ico w={25} h={31}>
                <path d="M.5 28V.500h15M3.500 2.500h13l7.500 7v20.500H3.500zM16.500 2.500v7.500h7" stroke="#777" />
                <path d="M10 15.500h11M10 20.500h11M10 25.500h11" stroke="#777" />
                <circle cx="7.500" cy="15.500" r="1" fill="#999" stroke="#888" /><circle cx="7.500" cy="20.500" r="1" stroke="#888" /><circle cx="7.500" cy="25.500" r="1" stroke="#888" />
              </Ico>
              <span className="ml-[9px] mt-1 leading-5">使用 PowerPoint 时采用的高级选项。</span>
            </div>
            <SectionHead className="h-[26px] pb-px">编辑选项</SectionHead>
            <div className="h-[7px] shrink-0" />
            <Option on text="选定时自动选定整个单词" k="W" />
            <Option on text="允许拖放式文字编辑" k="D" />
            <Option text="不自动超链接屏幕截图" k="H" />
            <div className="mt-[3px] flex h-6 shrink-0 items-center pl-3.5">
              <span className="w-[125px]"><Key text="最多可取消操作数" k="X" tail=":" /></span>
              <span className="flex h-6 w-[72px] items-center justify-between border border-[#ababab] pl-1.5 pr-1 text-[#444]">20
                <Ico w={8} h={14}><path d="M1 3.500L4 .800l3 2.700M1 10.500l3 2.700 3-2.700" stroke="#777" /></Ico>
              </span>
            </div>
            <SectionHead className="mt-3.5 h-[26px] pb-px">剪切、复制和粘贴</SectionHead>
            <div className="h-[7px] shrink-0" />
            <Option on text="使用智能剪切和粘贴" k="S" />
            <Option on text="粘贴内容时显示粘贴选项按钮" k="H" />
            <SectionHead className="mt-[17px] h-[26px] pb-px">笔</SectionHead>
            <div className="h-[7px] shrink-0" />
            <Option text="默认情况下，使用笔来选择并与内容进行交互" />
            <SectionHead className="mt-[17px] h-6"><span className="w-[116px]"><Key text="图像大小和质量" k="S" /></span><Select doc text="演示文稿1" className="w-[106px]" /></SectionHead>
            <div className="h-[7px] shrink-0" />
            <Option text="放弃编辑数据" k="C" info />
            <Option text="不压缩文件中的图像" k="N" info />
            <div className="mt-[3px] flex h-[23px] shrink-0 items-center pl-3.5">
              <Key text="默认分辨率" k="D" tail=":" /><Info className="ml-0.5" /><Select text="高保真" className="ml-[9px] w-[75px]" />
            </div>
            <SectionHead className="mt-3.5 h-[26px] pb-px">图表</SectionHead>
            <div className="h-[7px] shrink-0" />
            <Option on text="属性采用所有新演示文稿的图表数据点" k="P" info />
            <div className="mt-[3px] flex h-[23px] shrink-0 items-center pl-3.5">
              <span className="w-[101px]"><Key text="当前演示文稿" k="C" tail=":" /></span><Select doc text="演示文稿1" className="w-[106px]" />
            </div>
            <Option text="属性采用当前演示文稿的图表数据点" k="R" />
          </div>
          <div className="mt-0.5 flex h-[593px] w-[15px] flex-col bg-[#e6e6e6]">
            <span className="flex h-[15px] items-center justify-center border border-[#777] bg-white"><Ico w={7} h={4}><path d="M0 4h7L3.500 0z" fill="#777" /></Ico></span>
            <span className="h-[220px] border border-[#777] bg-white" />
            <span className="mt-auto flex h-[15px] items-center justify-center border border-[#777] bg-white"><Ico w={7} h={4}><path d="M0 0h7L3.500 4z" fill="#777" /></Ico></span>
          </div>
        </div>
      </div>
      <div className="mr-1.5 mt-1 flex justify-end gap-[9px] text-[#262626]">
        <button className="h-[25px] w-[75px] border-2 border-[#b7472a] bg-[#e6e6e6]">确定</button>
        <button className="h-[25px] w-[75px] border border-[#999] bg-[#e6e6e6]">取消</button>
      </div>
      <div className="absolute left-[137px] top-[266px] h-[49px] w-[245px] rounded-[19px] border-[10px] border-[#ed1c24]" />
      <Ico w={9} h={9} className="absolute bottom-0.5 right-px"><path d="M6 0h2v2H6zM3 3h2v2H3zM6 3h2v2H6zM0 6h2v2H0zM3 6h2v2H3zM6 6h2v2H6z" fill="#bbb" /></Ico>
    </section>
  );
}

function StatusBar() {
  return (
    <footer className="flex h-[23px] items-center whitespace-nowrap border-b border-t border-b-[#cfdbe8] border-t-[#c6c6c6] bg-[#f3f3f3] text-[#333]">
      <span className="w-[150px] pl-[7px] [word-spacing:.9px]">幻灯片 第 1 张，共 1 张</span>
      <Ico w={15} h={13} className="ml-[7px]"><path d="M6.500 11.500V2.500L.5.800v10h3l3 1.500V2.500L10 1M8 12l1-2 5-7 1 1-5 7zM14 8v3h-2" stroke="#666" /></Ico>
      <span className="ml-4 w-[60px]">中文(中国)</span>
      <Ico w={17} h={14} className="ml-3"><path d="M5 1.500A5.500 5.500 0 0 0 5 12M12 6V4.500" stroke="#555" strokeWidth="1.500" strokeDasharray="4 1.500" /><path d="M8 0v6M6 4l2 2 2-2M6.500 9.500l3 3L15.500 6.500" stroke="#555" strokeWidth="1.500" /></Ico>
      <span className="ml-0.5 w-[110px] pt-0.5 [word-spacing:.5px]">辅助功能: 一切就绪</span>
      <Ico w={12} h={12} className="ml-[1042px]"><path d="M0 5.500h12M0 8.500h8M0 11.500h12" stroke="#555" /><path d="M3 4h6L6 1z" fill="#555" /></Ico>
      <span className="ml-1">备注</span>
      <Ico w={14} h={13} className="ml-5"><path d="M1.500 0h11Q14 0 14 1.500v6Q14 9 12.500 9H7l-4 4V9H1.500Q0 9 0 7.500v-6Q0 0 1.500 0z" fill="#5c5c5c" /></Ico>
      <span className="ml-[3px]">批注</span>
      <span className="ml-[19px] flex h-[21px] w-10 items-center justify-center bg-[#c6c6c6]"><Ico w={14} h={13}><path d="M.5.500h13v12H.5zM3.500.500v12M3.500 9.500h10M6.500 3.500h4v3h-4z" stroke="#666" /></Ico></span>
      <Ico w={15} h={13} className="ml-[13px]"><path d="M.5.500h5v4h-5zM8.500.500h5v4h-5zM.5 8.500h5v4h-5zM8.500 8.500h5v4h-5z" stroke="#666" /></Ico>
      <Ico w={13} h={13} className="ml-[25px]"><path d="M.5.500h4l2 1 2-1h4v10h-4l-2 1.500-2-1.500h-4zM6.500 1.500V12M2 3h3M2 5.500h3M2 8h3M8 3h3M8 5.500h3M8 8h3" stroke="#666" /></Ico>
      <Ico w={13} h={12} className="ml-[27px]"><path d="M0 1h13M1.500 1v5.500h10V1M6.500 6.500v5M3.500 11.500h6" stroke="#666" strokeWidth="1.200" /></Ico>
      <span className="ml-5 h-px w-[8px] bg-[#444]" />
      <span className="ml-[5px] flex h-[11px] w-[100px] items-center">
        <i className="h-px w-[50px] bg-[#333]" /><i className="h-[11px] w-[5px] bg-[#666]" /><i className="h-px flex-1 bg-[#333]" />
      </span>
      <Ico w={9} h={9} className="ml-[5px]"><path d="M0 4.500h9M4.500 0v9" stroke="#444" /></Ico>
      <span className="ml-3 w-[45px] text-[#444]">113%</span>
      <Ico w={13} h={13}><path d="M.5.500h12v12H.5zM6.500 2v3M6.500 8v3M2 6.500h3M8 6.500h3" stroke="#666" /></Ico>
    </footer>
  );
}

export default function App() {
  return (
    <div className="relative h-[1033px] w-[1920px] overflow-hidden bg-[#e6e6e6] text-[12px] leading-4 [font-family:'Noto_Sans','Noto_Sans_CJK_SC',sans-serif]">
      <TitleBar />
      <Ribbon />
      <Workspace />
      <StatusBar />
      <Watermark />
      <OptionsDialog />
      <svg className="absolute left-[1270px] top-[850px]" width="90" height="95" viewBox="1270 850 90 95">
        <path d="M1281 858l36 16-9 7.500 38.500 47-9 7.500-38.500-47-9.500 8z" fill="#f00" />
      </svg>
      <div className="absolute left-[1911px] top-[137px] flex h-[52px] w-[9px] flex-col justify-end rounded-full border-2 border-[#777] bg-[#f0f0f0] p-px">
        <div className="h-[28px] rounded-full bg-[#f97b23]" />
      </div>
    </div>
  );
}
